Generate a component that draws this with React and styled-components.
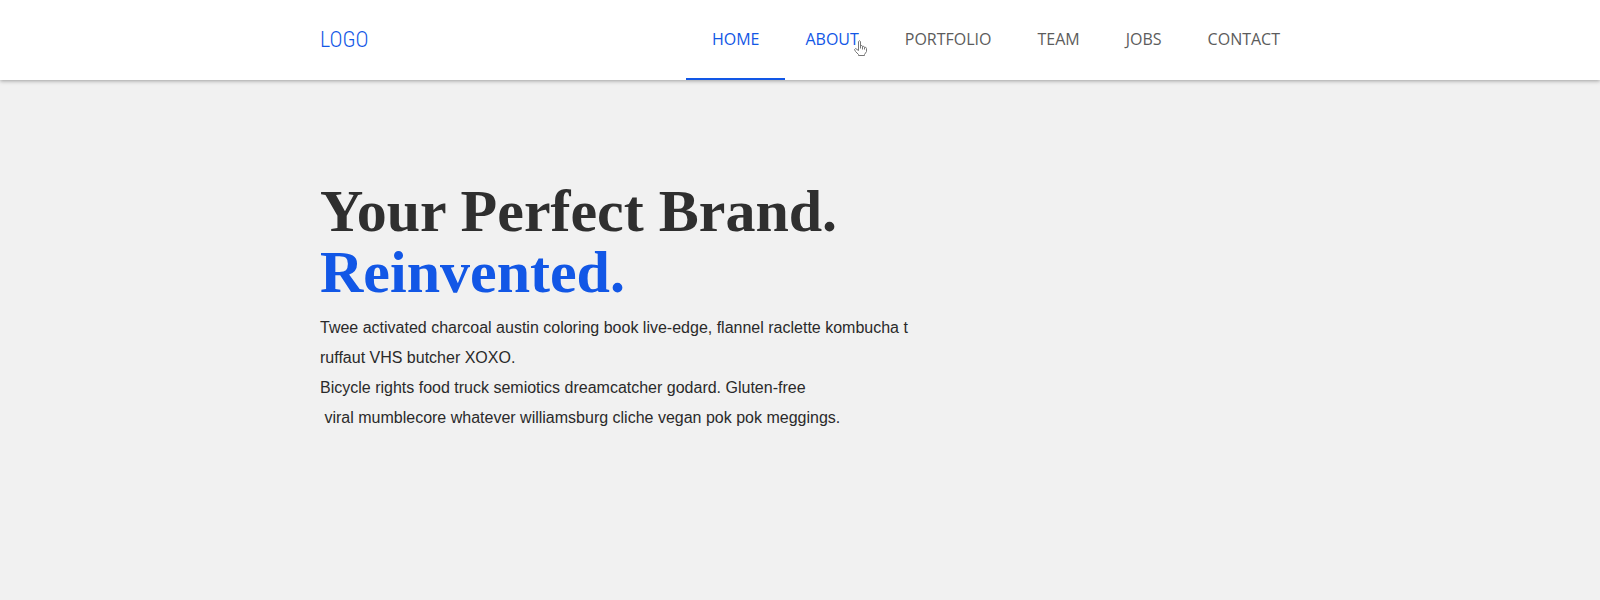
import React from "react";
import styled, { createGlobalStyle } from "styled-components";

const GlobalStyle = createGlobalStyle`
  * { box-sizing: border-box; }
  body { margin: 0; background: #f1f1f1; font-family: "Open Sans", sans-serif; }
`;
const Header = styled.header`
  background: #fff;
  box-shadow: 0 1px 4px rgba(0, 0, 0, 0.35);
`;
const Container = styled.div`
  width: 60%;
  margin: 0 auto;
`;
const Bar = styled(Container)`
  display: flex;
  justify-content: space-between;
  height: 80px;
`;
const Logo = styled.a`
  display: flex;
  align-items: center;
  color: #1257e6;
  font: 300 22px/24px "Roboto Condensed", "Liberation Sans Narrow", sans-serif;
  text-decoration: none;
`;
const Nav = styled.nav`
  display: flex;
  gap: 46px;
`;
const NavLink = styled.a`
  display: flex;
  align-items: center;
  position: relative;
  padding-bottom: 2px;
  color: ${(p) => (p.$active ? "#1257e6" : "#5c5c5c")};
  font-size: 16px;
  text-decoration: none;

  &::after {
    content: "";
    display: ${(p) => (p.$current ? "block" : "none")};
    position: absolute;
    right: -26px;
    bottom: 0;
    left: -26px;
    height: 2px;
    background: #1257e6;
  }
`;
const Pointer = styled.svg`
  position: absolute;
  top: 40px;
  right: -8px;
`;
const Hero = styled(Container).attrs({ as: "main" })`
  padding-top: 101px;
`;
const Title = styled.h1`
  margin: 0;
  color: #2f2f2f;
  font: bold 60px/61px "Liberation Serif", serif;
`;
const Accent = styled.span`
  display: block;
  color: #1257e6;
`;
const Copy = styled.p`
  margin: 10px 0 0;
  color: #2a2a2a;
  font: 16px/30px "Liberation Sans", sans-serif;
  white-space: pre-wrap;
`;
const links = ["HOME", "ABOUT", "PORTFOLIO", "TEAM", "JOBS", "CONTACT"];

const HandPointer = () => (
  <Pointer width="13" height="17" viewBox="0 0 13 17" aria-hidden="true">
    <path
      d="M4.5 10.5V1.5Q5.5 0 6.5 1.5V6Q8 4.500 8.500 6.500Q10 5.500 10.500 7.500Q12 6.500 12.500 8.500V11.500L10.500 14.500V15.500H4.500V14.500L1.500 11.500L.5 9.500Q1.500 7.500 3 9.500Z"
      fill="#fff"
      stroke="#777"
    />
    <path d="M6.500 6V8.500M8.500 6.500V9.500M10.500 7.500V9.500" stroke="#777" />
  </Pointer>
);

export default function App() {
  return (
    <>
      <GlobalStyle />
      <Header>
        <Bar>
          <Logo href="#">LOGO</Logo>
          <Nav>
            {links.map((l, i) => (
              <NavLink key={l} href={"#" + l.toLowerCase()} $current={i === 0} $active={i < 2}>
                {l}
                {l === "ABOUT" && <HandPointer />}
              </NavLink>
            ))}
          </Nav>
        </Bar>
      </Header>
      <Hero>
        <Title>Your Perfect Brand.<Accent>Reinvented.</Accent></Title>
        <Copy>{`Twee activated charcoal austin coloring book live-edge, flannel raclette kombucha t
ruffaut VHS butcher XOXO.
Bicycle rights food truck semiotics dreamcatcher godard. Gluten-free
 viral mumblecore whatever williamsburg cliche vegan pok pok meggings.`}</Copy>
      </Hero>
    </>
  );
}
